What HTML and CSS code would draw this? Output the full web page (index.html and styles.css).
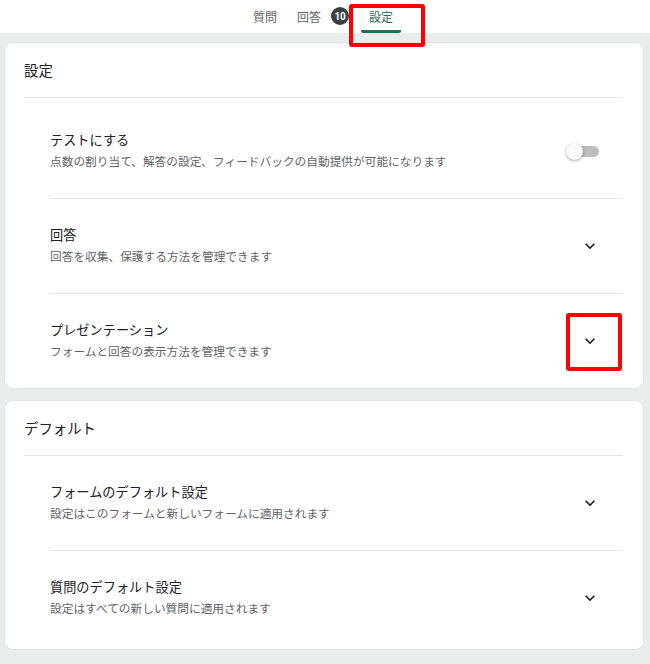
FILE: index.html
```html
<!DOCTYPE html>
<html lang="ja">
<head>
    <meta charset="UTF-8">
    <meta name="viewport" content="width=device-width, initial-scale=1.0">
    <title>設定</title>
    <link rel="stylesheet" href="styles.css">
</head>
<body>
    <nav class="tabs">
        <div class="tab">質問</div>
        <div class="tab">回答<span class="badge">10</span></div>
        <div class="tab active">設定<span class="mark mark-tab"></span></div>
    </nav>

    <main class="page">
        <section class="card">
            <h2 class="card-title">設定</h2>
            <div class="list list-settings">
                <div class="item">
                    <div class="item-text">
                        <div class="item-title">テストにする</div>
                        <div class="item-desc">点数の割り当て、解答の設定、フィードバックの自動提供が可能になります</div>
                    </div>
                    <div class="toggle"><span class="thumb"></span></div>
                </div>
                <div class="item">
                    <div class="item-text">
                        <div class="item-title">回答</div>
                        <div class="item-desc">回答を収集、保護する方法を管理できます</div>
                    </div>
                    <div class="chevron">
                        <svg viewBox="0 0 24 24" width="20" height="20"><path d="M16.59 8.59L12 13.17 7.41 8.59 6 10l6 6 6-6z"/></svg>
                    </div>
                </div>
                <div class="item">
                    <div class="item-text">
                        <div class="item-title">プレゼンテーション</div>
                        <div class="item-desc">フォームと回答の表示方法を管理できます</div>
                    </div>
                    <div class="chevron">
                        <svg viewBox="0 0 24 24" width="20" height="20"><path d="M16.59 8.59L12 13.17 7.41 8.59 6 10l6 6 6-6z"/></svg>
                        <span class="mark mark-icon"></span>
                    </div>
                </div>
            </div>
        </section>

        <section class="card">
            <h2 class="card-title">デフォルト</h2>
            <div class="list list-defaults">
                <div class="item">
                    <div class="item-text">
                        <div class="item-title">フォームのデフォルト設定</div>
                        <div class="item-desc">設定はこのフォームと新しいフォームに適用されます</div>
                    </div>
                    <div class="chevron">
                        <svg viewBox="0 0 24 24" width="20" height="20"><path d="M16.59 8.59L12 13.17 7.41 8.59 6 10l6 6 6-6z"/></svg>
                    </div>
                </div>
                <div class="item">
                    <div class="item-text">
                        <div class="item-title">質問のデフォルト設定</div>
                        <div class="item-desc">設定はすべての新しい質問に適用されます</div>
                    </div>
                    <div class="chevron">
                        <svg viewBox="0 0 24 24" width="20" height="20"><path d="M16.59 8.59L12 13.17 7.41 8.59 6 10l6 6 6-6z"/></svg>
                    </div>
                </div>
            </div>
        </section>
    </main>
</body>
</html>
```

FILE: styles.css
```css
body {
    margin: 0;
    background-color: #e8eded;
    font-family: Roboto, 'Noto Sans CJK JP', sans-serif;
    color: #202124;
}

/* top tab bar */
.tabs {
    display: flex;
    justify-content: center;
    gap: 4px;
    height: 33px;
    padding-right: 4px;
    background-color: #fff;
}

.tab {
    position: relative;
    display: flex;
    align-items: center;
    height: 33px;
    padding: 2px 8px 0;
    box-sizing: border-box;
    font-size: 12px;
    color: #5f6368;
    border-bottom: 3px solid transparent;
}

.tab.active {
    color: #2b6a55;
    border-bottom-color: #2b6a55;
    border-radius: 2px;
}

.badge {
    display: inline-flex;
    align-items: center;
    justify-content: center;
    width: 18px;
    height: 18px;
    margin-left: 10px;
    border-radius: 50%;
    background-color: #3c4043;
    color: #fff;
    font-size: 10px;
    font-weight: bold;
    letter-spacing: -0.3px;
}

/* red highlight boxes */
.mark {
    position: absolute;
    box-sizing: border-box;
    border: 4px solid #ff0000;
    border-radius: 3px;
    z-index: 2;
}

.mark-tab {
    left: -12px;
    top: 4px;
    width: 76px;
    height: 43px;
}

.mark-icon {
    left: -14px;
    top: -18px;
    width: 56px;
    height: 58px;
}

/* cards */
.page {
    display: flex;
    flex-direction: column;
    gap: 13px;
    padding: 10px 7px 15px 5px;
}

.card {
    background-color: #fff;
    border-radius: 8px;
    padding: 0 20px 0 19px;
    box-shadow: 0 0 0 1px #dfe4e4;
}

.card-title {
    margin: 0;
    padding: 19px 0 15px;
    font-size: 14.4px;
    font-weight: normal;
    line-height: 20px;
    border-bottom: 1px solid #e3e5e5;
}

.list {
    margin-left: 26px;
}

.list-settings {
    padding-top: 6px;
}

.item {
    display: flex;
    align-items: center;
    padding: 27px 0;
    border-bottom: 1px solid #e3e5e5;
}

.item:last-child {
    border-bottom: none;
}

.list-defaults .item:last-child {
    padding-bottom: 31px;
}

.item-text {
    flex: 1;
}

.item-title {
    font-size: 13.2px;
    line-height: 20px;
    margin-bottom: 2px;
}

.item-desc {
    font-size: 11.7px;
    line-height: 18px;
    color: #5f6368;
}

.chevron {
    position: relative;
    width: 20px;
    height: 20px;
    margin-right: 23px;
}

.chevron svg {
    display: block;
    fill: #202124;
}

/* switch, off state */
.toggle {
    position: relative;
    width: 27px;
    height: 11px;
    margin-right: 24px;
    border-radius: 6px;
    background-color: #bdbdbd;
}

.thumb {
    position: absolute;
    left: -6px;
    top: -3px;
    width: 17px;
    height: 17px;
    border-radius: 50%;
    background-color: #fafafa;
    box-shadow: 0 1px 3px rgba(0, 0, 0, 0.35);
}
```
